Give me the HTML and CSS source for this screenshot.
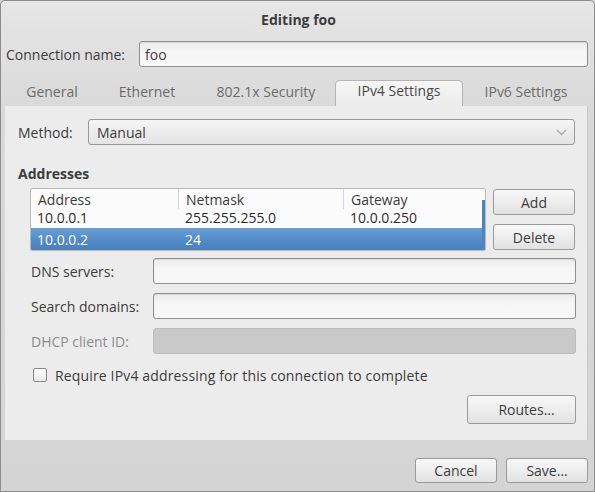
FILE: index.html
```html
<!DOCTYPE html>
<html>
<head>
<meta charset="utf-8">
<link rel="stylesheet" href="styles.css">
</head>
<body>
<div class="window">
  <div class="titlebar">Editing foo</div>
  <div class="conn-row">
    <span class="conn-label">Connection name:</span>
    <div class="entry conn-entry">foo</div>
  </div>
  <div class="tabs">
    <div class="tab t1">General</div>
    <div class="tab t2">Ethernet</div>
    <div class="tab t3">802.1x Security</div>
    <div class="tab t4 active">IPv4 Settings</div>
    <div class="tab t5">IPv6 Settings</div>
  </div>
  <div class="panel">
    <div class="method-row">
      <span class="method-label">Method:</span>
      <div class="combo">
        <span>Manual</span>
        <svg class="chev" width="11" height="7" viewBox="0 0 11 7"><polyline points="1,1 5.5,5.5 10,1" fill="none" stroke="#a8a8a8" stroke-width="1.4"/></svg>
      </div>
    </div>
    <div class="heading">Addresses</div>
    <div class="addr-section">
      <div class="list">
        <div class="list-header">
          <div class="col c1">Address</div>
          <div class="col c2">Netmask</div>
          <div class="col c3">Gateway</div>
        </div>
        <div class="list-row">
          <div class="cell c1">10.0.0.1</div>
          <div class="cell c2">255.255.255.0</div>
          <div class="cell c3">10.0.0.250</div>
        </div>
        <div class="list-row selected">
          <div class="cell c1">10.0.0.2</div>
          <div class="cell c2">24</div>
          <div class="cell c3"></div>
        </div>
        <div class="scroll-strip"></div>
      </div>
      <div class="side-buttons">
        <div class="button side-btn">Add</div>
        <div class="button side-btn">Delete</div>
      </div>
    </div>
    <div class="form-rows">
      <div class="form-row">
        <span class="form-label">DNS servers:</span>
        <div class="entry form-entry"></div>
      </div>
      <div class="form-row">
        <span class="form-label">Search domains:</span>
        <div class="entry form-entry"></div>
      </div>
      <div class="form-row">
        <span class="form-label disabled">DHCP client ID:</span>
        <div class="entry form-entry entry-disabled"></div>
      </div>
    </div>
    <div class="check-row">
      <span class="checkbox"></span>
      <span class="check-text">Require IPv4 addressing for this connection to complete</span>
    </div>
    <div class="routes-row">
      <div class="button routes-btn">Routes…</div>
    </div>
  </div>
  <div class="footer">
    <div class="button foot-btn">Cancel</div>
    <div class="button foot-btn">Save…</div>
  </div>
</div>
</body>
</html>
```
FILE: styles.css
```css
* { box-sizing: border-box; }
html, body { margin: 0; padding: 0; }
body {
  font-family: "Open Sans", "DejaVu Sans", sans-serif;
  font-size: 14px;
  color: #3c3c3c;
  background: #d4d4d4;
}
.window {
  width: 595px;
  height: 492px;
  border: 1px solid #8c8c8c;
  border-radius: 5px 5px 0 0;
  background: linear-gradient(#e6e6e6 0, #d9d9d9 110px, #d4d4d4 100%);
  display: flex;
  flex-direction: column;
}
.titlebar {
  height: 36px;
  display: flex;
  align-items: center;
  justify-content: center;
  font-weight: bold;
  padding-left: 2px;
}
.conn-row {
  margin-top: 4px;
  height: 26px;
  display: flex;
  align-items: center;
  padding: 0 6px 0 5px;
}
.conn-label { width: 133px; }
.entry {
  height: 26px;
  border: 1px solid #8e8e8e;
  border-radius: 3px;
  background: linear-gradient(#ececec, #f6f6f6 40%, #f8f8f8);
  box-shadow: inset 0 1px 1px rgba(0,0,0,0.08);
  display: flex;
  align-items: center;
  padding-left: 5px;
}
.conn-entry { flex: 1; }
.tabs {
  margin-top: 13px;
  height: 26px;
  display: flex;
  padding-left: 4px;
}
.tab {
  display: flex;
  align-items: center;
  justify-content: center;
  color: #6b6b6b;
  height: 26px;
  padding-bottom: 4px;
}
.t1 { width: 94px; }
.t2 { width: 96px; }
.t3 { width: 142px; }
.t4 { width: 128px; margin: 0 -2px; }
.t5 { width: 130px; }
.tab.active {
  color: #4a4a4a;
  background: linear-gradient(#f6f6f6, #ececec);
  border: 1px solid #b4b4b4;
  border-bottom: none;
  border-radius: 5px 5px 0 0;
  padding-bottom: 6px;
}
.panel {
  margin-left: 4px;
  width: 583px;
  height: 334px;
  background: #ececec;
  border-right: 1px solid #c9c9c9;
  padding: 13px 11px 0 13px;
  display: flex;
  flex-direction: column;
}
.method-row {
  display: flex;
  align-items: center;
  height: 26px;
}
.method-label { width: 70px; }
.combo {
  flex: 1;
  height: 26px;
  margin-right: 1px;
  border: 1px solid #9a9a9a;
  border-radius: 3px;
  background: linear-gradient(#f4f4f4, #e4e4e4);
  display: flex;
  align-items: center;
  justify-content: space-between;
  padding: 0 7px 0 8px;
}
.heading {
  margin-top: 20px;
  height: 18px;
  line-height: 18px;
  font-weight: bold;
}
.addr-section {
  margin-top: 5px;
  display: flex;
  padding-left: 12px;
}
.list {
  position: relative;
  width: 456px;
  height: 63px;
  background: #fbfbfb;
  border: 1px solid #b9b9b9;
  border-radius: 2px;
  overflow: hidden;
}
.list-header, .list-row {
  display: flex;
}
.list-header { height: 20px; }
.col {
  height: 20px;
  line-height: 19px;
  padding-top: 1px;
  padding-left: 7px;
  border-right: 1px solid #d6d6d6;
}
.col.c3 { border-right: none; }
.c1 { width: 148px; }
.c2 { width: 165px; }
.c3 { flex: 1; }
.list-row { height: 19px; }
.cell {
  height: 19px;
  line-height: 18px;
  padding-left: 6px;
  color: #2e2e2e;
}
.list-row.selected {
  height: 23px;
  background: linear-gradient(#6a9fd5, #5089c6 60%, #4a80bd);
  border-bottom: 1px solid #3f73ad;
}
.list-row.selected .cell {
  color: #ffffff;
  height: 22px;
  line-height: 23px;
}
.scroll-strip {
  position: absolute;
  right: 0;
  top: 11px;
  width: 3px;
  bottom: 0;
  background: #4f84bf;
}
.side-buttons {
  margin-left: 7px;
  margin-top: 1px;
  display: flex;
  flex-direction: column;
  gap: 9px;
}
.button {
  border: 1px solid #9a9a9a;
  border-radius: 3px;
  background: linear-gradient(#f8f8f8, #e2e2e2);
  display: flex;
  align-items: center;
  justify-content: center;
  color: #3c3c3c;
}
.side-btn { width: 82px; height: 26px; }
.form-rows {
  margin-top: 7px;
  display: flex;
  flex-direction: column;
  gap: 9px;
  padding-left: 13px;
}
.form-row {
  display: flex;
  align-items: center;
  height: 26px;
}
.form-label { width: 122px; }
.form-label.disabled { color: #8c8c8c; }
.form-entry { flex: 1; }
.entry-disabled {
  background: #c9c9c9;
  border-color: #bdbdbd;
  box-shadow: none;
}
.check-row {
  margin-top: 11px;
  height: 20px;
  display: flex;
  align-items: center;
  padding-left: 15px;
  gap: 8px;
}
.check-text { letter-spacing: 0.15px; }
.checkbox {
  width: 14px;
  height: 14px;
  border: 1px solid #8a8a8a;
  border-radius: 2px;
  background: linear-gradient(#ffffff, #eaeaea);
}
.routes-row {
  margin-top: 10px;
  display: flex;
  justify-content: flex-end;
}
.routes-btn { width: 109px; height: 29px; padding-left: 10px; }
.footer {
  margin-top: 18px;
  display: flex;
  justify-content: flex-end;
  gap: 9px;
  padding-right: 6px;
}
.foot-btn { width: 82px; height: 25px; }
```
